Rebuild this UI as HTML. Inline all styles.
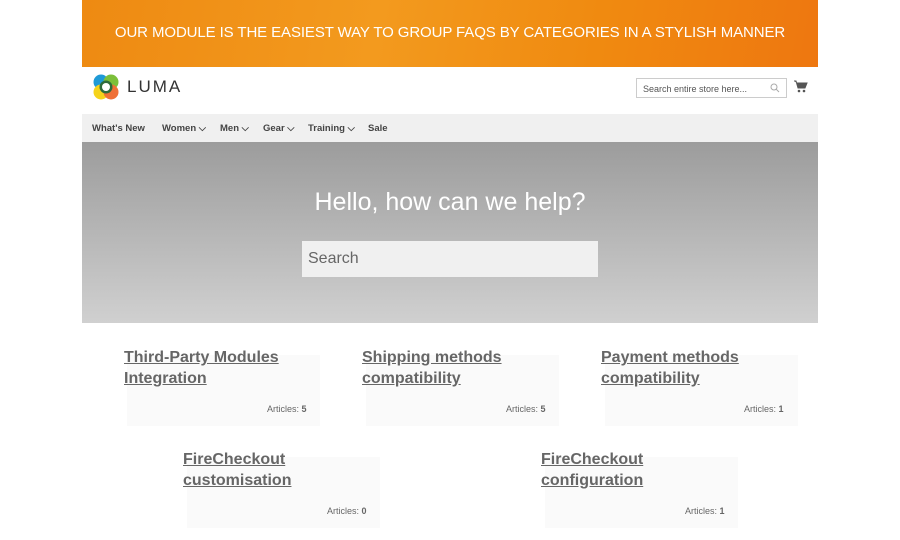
<!DOCTYPE html>
<html><head><style>
*{margin:0;padding:0;box-sizing:border-box}
body{width:900px;height:540px;background:#fff;font-family:"Liberation Sans",sans-serif;position:relative;overflow:hidden}
.a{position:absolute}
.banner{left:82px;top:0;width:736px;height:67px;background:linear-gradient(100deg,#ee8a12,#f39a1e 40%,#f08a10 70%,#ee7710);color:#fff;font-size:15px;letter-spacing:-0.1px;text-align:center;line-height:66px}
.nav{left:82px;top:114px;width:736px;height:28px;background:#f0f0f0;font-size:9.5px;font-weight:bold;color:#444}
.nav span{position:absolute;top:9px}
.hero{left:82px;top:142px;width:736px;height:181px;background:linear-gradient(#9c9c9c,#d0d0d0)}
.box{background:#fafafa;width:193px;height:71px}
.t{font-size:16px;font-weight:bold;color:#666;text-decoration:underline;line-height:21px}
.art{font-size:9px;color:#666}
</style></head><body>
<div class="a banner">OUR MODULE IS THE EASIEST WAY TO GROUP FAQS BY CATEGORIES IN A STYLISH MANNER</div>
<svg class="a" style="left:92px;top:73px" width="28" height="28" viewBox="0 0 28 28">
<circle cx="9" cy="9" r="7.5" fill="#1f9ad6"/><circle cx="19" cy="9" r="7.5" fill="#7cbf3a"/><circle cx="9" cy="19" r="7.5" fill="#f5d31b"/><circle cx="19" cy="19" r="7.5" fill="#ef7037"/>
<circle cx="14" cy="14" r="6.5" fill="#2e6b3a"/><circle cx="14" cy="14" r="4" fill="#fff"/></svg>
<div class="a" style="left:127px;top:77px;font-size:17px;letter-spacing:2px;color:#333">LUMA</div>
<div class="a" style="left:636px;top:78px;width:151px;height:20px;border:1px solid #ccc;font-size:9px;color:#555;padding:5px 6px">Search entire store here...</div>
<svg class="a" style="left:770px;top:83px" width="10" height="10" viewBox="0 0 10 10"><circle cx="4" cy="4" r="3" fill="none" stroke="#aaa"/><path d="M6 6l3 3" stroke="#aaa"/></svg>
<svg class="a" style="left:794px;top:80px" width="14" height="14" viewBox="0 0 14 14"><path d="M0 1h2l2 7h7l2-5H3" fill="#555" stroke="#555"/><circle cx="5" cy="11" r="1.3" fill="#555"/><circle cx="10" cy="11" r="1.3" fill="#555"/></svg>
<div class="a nav"><span style="left:10px">What's New</span><span style="left:80px">Women ⌵</span><span style="left:138px">Men ⌵</span><span style="left:181px">Gear ⌵</span><span style="left:226px">Training ⌵</span><span style="left:286px">Sale</span></div>
<div class="a hero"></div>
<div class="a" style="left:82px;top:188px;width:736px;text-align:center;font-size:25px;color:#fff;font-weight:300">Hello, how can we help?</div>
<div class="a" style="left:302px;top:241px;width:296px;height:36px;background:#f0f0f0;font-size:16px;color:#666;padding:9px 6px">Search</div>

<div class="a box" style="left:127px;top:355px"></div>
<div class="a t" style="left:124px;top:347px">Third-Party Modules<br>Integration</div>
<div class="a art" style="left:267px;top:404px">Articles: <b>5</b></div>
<div class="a box" style="left:366px;top:355px"></div>
<div class="a t" style="left:362px;top:347px">Shipping methods<br>compatibility</div>
<div class="a art" style="left:506px;top:404px">Articles: <b>5</b></div>
<div class="a box" style="left:605px;top:355px"></div>
<div class="a t" style="left:601px;top:347px">Payment methods<br>compatibility</div>
<div class="a art" style="left:744px;top:404px">Articles: <b>1</b></div>
<div class="a box" style="left:187px;top:457px"></div>
<div class="a t" style="left:183px;top:449px">FireCheckout<br>customisation</div>
<div class="a art" style="left:327px;top:506px">Articles: <b>0</b></div>
<div class="a box" style="left:545px;top:457px"></div>
<div class="a t" style="left:541px;top:449px">FireCheckout<br>configuration</div>
<div class="a art" style="left:685px;top:506px">Articles: <b>1</b></div>
</body></html>
